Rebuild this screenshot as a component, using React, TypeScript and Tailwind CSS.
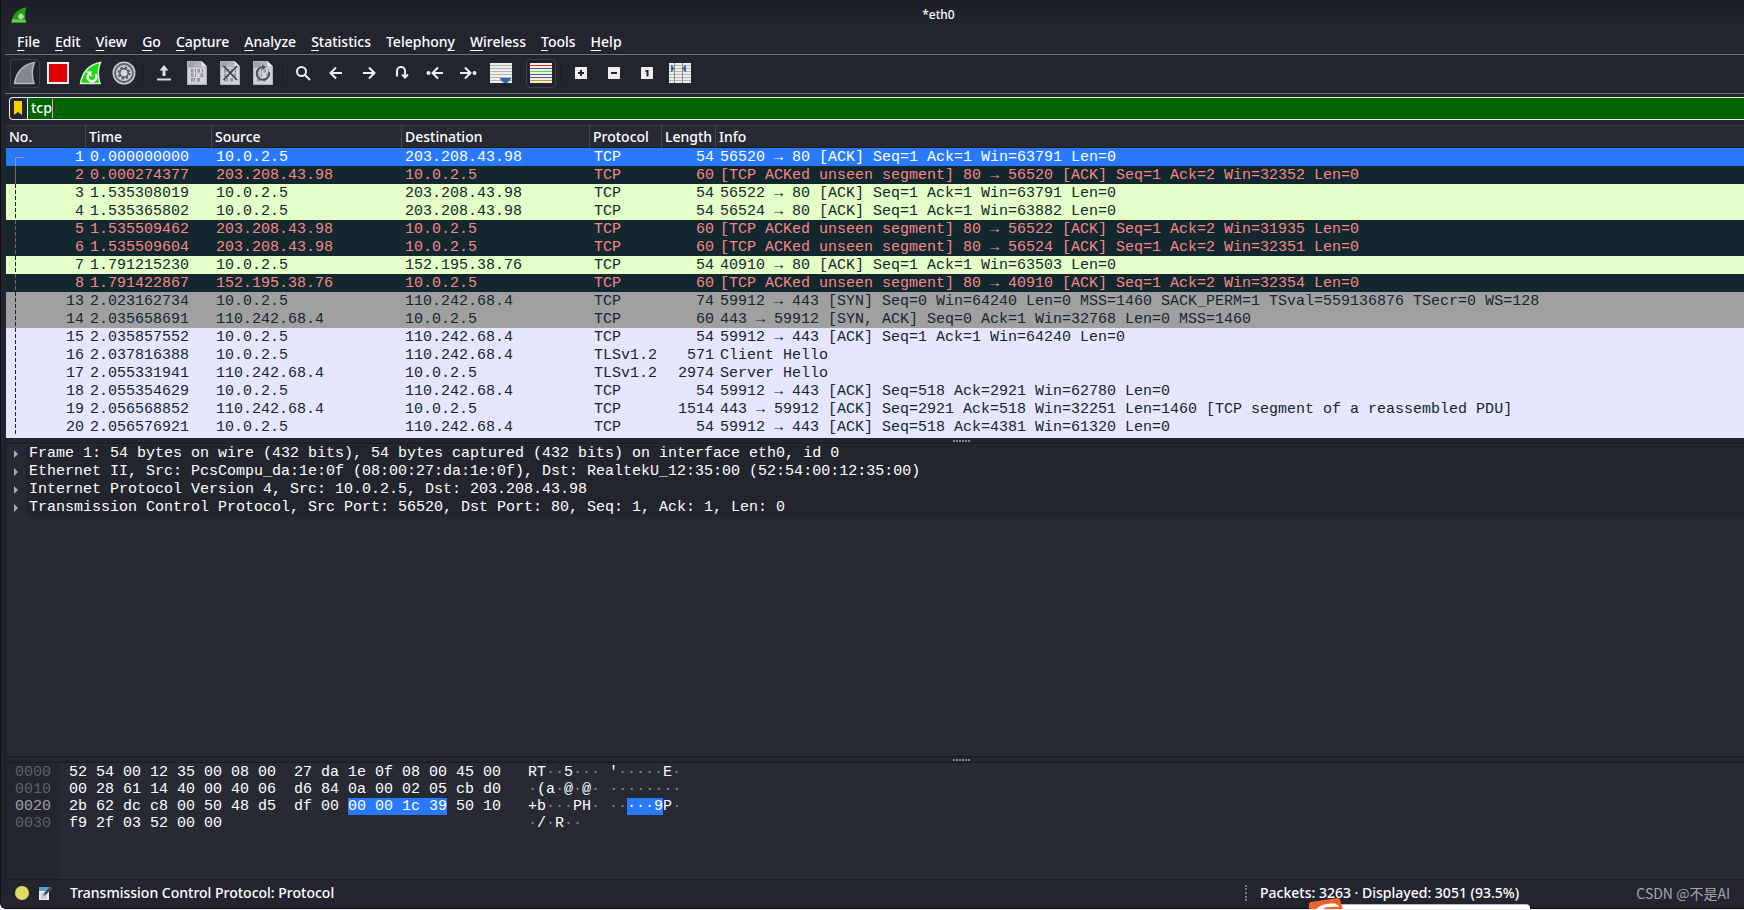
import type { ReactNode } from 'react';
import clsx from 'clsx';

type RowKind = 'selected' | 'bad' | 'http' | 'syn' | 'tcp';

interface Packet {
  no: number;
  time: string;
  src: string;
  dst: string;
  proto: string;
  len: number;
  info: string;
  kind: RowKind;
}

const ROW_STYLES: Record<RowKind, string> = {
  selected: 'bg-[#2979ff] text-white',
  bad: 'bg-[#12272e] text-[#f78787]',
  http: 'bg-[#e4ffc7] text-[#12272e]',
  syn: 'bg-[#a0a0a0] text-[#12272e]',
  tcp: 'bg-[#e7e6ff] text-[#12272e]',
};

const MENUS: [string, string, string][] = [
  ['', 'F', 'ile'],
  ['', 'E', 'dit'],
  ['', 'V', 'iew'],
  ['', 'G', 'o'],
  ['', 'C', 'apture'],
  ['', 'A', 'nalyze'],
  ['', 'S', 'tatistics'],
  ['Telephon', 'y', ''],
  ['', 'W', 'ireless'],
  ['', 'T', 'ools'],
  ['', 'H', 'elp'],
];

const HOST = '10.0.2.5';

const PACKETS: Packet[] = [
  { no: 1, time: '0.000000000', src: HOST, dst: '203.208.43.98', proto: 'TCP', len: 54, info: '56520 → 80 [ACK] Seq=1 Ack=1 Win=63791 Len=0', kind: 'selected' },
  { no: 2, time: '0.000274377', src: '203.208.43.98', dst: HOST, proto: 'TCP', len: 60, info: '[TCP ACKed unseen segment] 80 → 56520 [ACK] Seq=1 Ack=2 Win=32352 Len=0', kind: 'bad' },
  { no: 3, time: '1.535308019', src: HOST, dst: '203.208.43.98', proto: 'TCP', len: 54, info: '56522 → 80 [ACK] Seq=1 Ack=1 Win=63791 Len=0', kind: 'http' },
  { no: 4, time: '1.535365802', src: HOST, dst: '203.208.43.98', proto: 'TCP', len: 54, info: '56524 → 80 [ACK] Seq=1 Ack=1 Win=63882 Len=0', kind: 'http' },
  { no: 5, time: '1.535509462', src: '203.208.43.98', dst: HOST, proto: 'TCP', len: 60, info: '[TCP ACKed unseen segment] 80 → 56522 [ACK] Seq=1 Ack=2 Win=31935 Len=0', kind: 'bad' },
  { no: 6, time: '1.535509604', src: '203.208.43.98', dst: HOST, proto: 'TCP', len: 60, info: '[TCP ACKed unseen segment] 80 → 56524 [ACK] Seq=1 Ack=2 Win=32351 Len=0', kind: 'bad' },
  { no: 7, time: '1.791215230', src: HOST, dst: '152.195.38.76', proto: 'TCP', len: 54, info: '40910 → 80 [ACK] Seq=1 Ack=1 Win=63503 Len=0', kind: 'http' },
  { no: 8, time: '1.791422867', src: '152.195.38.76', dst: HOST, proto: 'TCP', len: 60, info: '[TCP ACKed unseen segment] 80 → 40910 [ACK] Seq=1 Ack=2 Win=32354 Len=0', kind: 'bad' },
  { no: 13, time: '2.023162734', src: HOST, dst: '110.242.68.4', proto: 'TCP', len: 74, info: '59912 → 443 [SYN] Seq=0 Win=64240 Len=0 MSS=1460 SACK_PERM=1 TSval=559136876 TSecr=0 WS=128', kind: 'syn' },
  { no: 14, time: '2.035658691', src: '110.242.68.4', dst: HOST, proto: 'TCP', len: 60, info: '443 → 59912 [SYN, ACK] Seq=0 Ack=1 Win=32768 Len=0 MSS=1460', kind: 'syn' },
  { no: 15, time: '2.035857552', src: HOST, dst: '110.242.68.4', proto: 'TCP', len: 54, info: '59912 → 443 [ACK] Seq=1 Ack=1 Win=64240 Len=0', kind: 'tcp' },
  { no: 16, time: '2.037816388', src: HOST, dst: '110.242.68.4', proto: 'TLSv1.2', len: 571, info: 'Client Hello', kind: 'tcp' },
  { no: 17, time: '2.055331941', src: '110.242.68.4', dst: HOST, proto: 'TLSv1.2', len: 2974, info: 'Server Hello', kind: 'tcp' },
  { no: 18, time: '2.055354629', src: HOST, dst: '110.242.68.4', proto: 'TCP', len: 54, info: '59912 → 443 [ACK] Seq=518 Ack=2921 Win=62780 Len=0', kind: 'tcp' },
  { no: 19, time: '2.056568852', src: '110.242.68.4', dst: HOST, proto: 'TCP', len: 1514, info: '443 → 59912 [ACK] Seq=2921 Ack=518 Win=32251 Len=1460 [TCP segment of a reassembled PDU]', kind: 'tcp' },
  { no: 20, time: '2.056576921', src: HOST, dst: '110.242.68.4', proto: 'TCP', len: 54, info: '59912 → 443 [ACK] Seq=518 Ack=4381 Win=61320 Len=0', kind: 'tcp' },
];

const DETAILS = [
  'Frame 1: 54 bytes on wire (432 bits), 54 bytes captured (432 bits) on interface eth0, id 0',
  'Ethernet II, Src: PcsCompu_da:1e:0f (08:00:27:da:1e:0f), Dst: RealtekU_12:35:00 (52:54:00:12:35:00)',
  'Internet Protocol Version 4, Src: 10.0.2.5, Dst: 203.208.43.98',
  'Transmission Control Protocol, Src Port: 56520, Dst Port: 80, Seq: 1, Ack: 1, Len: 0',
];

// [before, highlighted, after] for both the hex and the ascii side
const HEX_ROWS = [
  { offset: '0000', hex: ['52 54 00 12 35 00 08 00  27 da 1e 0f 08 00 45 00', '', ''], ascii: ["RT··5··· '·····E·", '', ''] },
  { offset: '0010', hex: ['00 28 61 14 40 00 40 06  d6 84 0a 00 02 05 cb d0', '', ''], ascii: ['·(a·@·@· ········', '', ''] },
  { offset: '0020', hex: ['2b 62 dc c8 00 50 48 d5  df 00 ', '00 00 1c 39', ' 50 10'], ascii: ['+b···PH· ··', '···9', 'P·'] },
  { offset: '0030', hex: ['f9 2f 03 52 00 00', '', ''], ascii: ['·/·R··', '', ''] },
];

const MONO = "font-['Liberation_Mono',monospace] text-[15px]";

/* ---------- icons ---------- */

const FIN = 'M1.5 22.5C3 12 10 3 21.5 1.5C18.500 8 19 16 21 22.500Z';

function Fin({ fill, stroke, children }: { fill: string; stroke: string; children?: ReactNode }) {
  return (
    <svg width="24" height="24" viewBox="0 0 24 24">
      <path d={FIN} fill={fill} stroke={stroke} strokeWidth="1.5" />
      {children}
    </svg>
  );
}

function AppLogo() {
  return (
    <svg width="16" height="16" viewBox="0 0 16 16">
      <path d="M0.500 15.500C1 8 6 1.500 15.500 0.500C13.500 5 14 11 15.500 15.500Z" fill="#1fa012" />
      <path d="M0.500 15.500C0.500 14 1 13 1.500 12L14 13L15.500 15.500Z" fill="#69c45c" />
      <circle cx="10" cy="9.500" r="2.400" fill="#a9dba2" stroke="#dff2dc" strokeWidth="1" strokeDasharray="1.200 0.700" />
    </svg>
  );
}

function Gear() {
  return (
    <svg width="24" height="24" viewBox="0 0 24 24" fill="none">
      <circle cx="12" cy="12" r="11.500" fill="#c9cbcf" />
      <circle cx="12" cy="12" r="9" stroke="#5c5f67" strokeWidth="1.800" />
      <circle cx="12" cy="12" r="5.700" stroke="#4f525a" strokeWidth="1.600" strokeDasharray="2.240 2.240" />
      <circle cx="12" cy="12" r="4.200" fill="#d4d6da" stroke="#4f525a" strokeWidth="1.500" />
    </svg>
  );
}

function BinaryDoc({ children }: { children?: ReactNode }) {
  return (
    <svg width="20" height="24" viewBox="0 0 20 24" fill="none">
      <path d="M0 0H14.500L20 5.500V24H0Z" fill="#b0b2b7" />
      <path d="M1.200 6.500H18.800V22.800H1.200Z" fill="#d2d4d8" />
      <path d="M1.200 1.200H9C7.500 2.500 7 4 6.500 6.500H1.200Z" fill="#9fa1a7" />
      <path d="M14.500 0V5.500H20Z" fill="#e7e8ea" />
      {[8, 12.5, 17].map((y, i) => (
        <g key={y} stroke="#8b8e95" strokeWidth="1">
          <path d={`M${i === 2 ? 7.5 : 8.5} ${y}V${y + 3.5}M${i === 2 ? 11 : 15.5} ${y}V${y + 3.5}`} />
          <rect x="4.500" y={y + 0.5} width="1.500" height="2.500" />
          <rect x={i === 1 ? 14 : 11} y={y + 0.5} width="1.500" height="2.500" />
        </g>
      ))}
      {children}
    </svg>
  );
}

function Glyph({ d, children }: { d: string; children?: ReactNode }) {
  return (
    <svg width="18" height="18" viewBox="0 0 18 18" fill="none" stroke="#eeeeec" strokeWidth="2">
      <path d={d} />
      {children}
    </svg>
  );
}

function Lines({ colors, children }: { colors: string[]; children?: ReactNode }) {
  return (
    <svg width="22" height="22" viewBox="0 0 22 22">
      <rect y="1" width="22" height="20" fill="#eeeeec" />
      {colors.map((c, i) => (
        <rect key={i} y={3 + i * 3} width="22" height="1" fill={c} />
      ))}
      {children}
    </svg>
  );
}

function ZoomBox({ d }: { d: string }) {
  return (
    <svg width="12" height="12" viewBox="0 0 12 12" fill="none">
      <rect width="12" height="12" rx="0.500" fill="#eeeeec" />
      <path d={d} stroke="#23252e" strokeWidth="2" />
    </svg>
  );
}

const GREYS = ['#b5b6b0', '#b5b6b0', '#b5b6b0', '#b5b6b0', '#b5b6b0', '#b5b6b0'];
const RAINBOW = ['#ef2929', '#3465a4', '#73d216', '#3465a4', '#75507b', '#c4a000'];

/* ---------- pieces ---------- */

function ToolButton({ label, framed, children }: { label: string; framed?: boolean; children: ReactNode }) {
  return (
    <button type="button" aria-label={label} className="flex w-[33px] shrink-0 items-center justify-center">
      <span
        className={clsx(
          'flex h-[29px] w-[30px] items-center justify-center rounded-sm border',
          framed ? 'border-[#3d4048] bg-[#20222a]' : 'border-transparent',
        )}
      >
        {children}
      </span>
    </button>
  );
}

function ToolSep() {
  return <span className="mx-[3px] h-5 w-px shrink-0 bg-[#1c1e25]" />;
}

function SplitHandle() {
  return (
    <div className="flex h-[5px] shrink-0 items-center justify-center gap-px pl-[178px]">
      {Array.from({ length: 6 }, (_, i) => (
        <span key={i} className="h-[2px] w-[2px] bg-[#85878c]" />
      ))}
    </div>
  );
}

// Conversation line drawn in the left margin of the No. column
function StreamLine({ index }: { index: number }) {
  return (
    <svg className="absolute left-[9px] top-0" width="10" height="18" viewBox="0 0 10 18" fill="none">
      {index === 0 && <path d="M0.500 18V9.500H9" stroke="#8a99b5" />}
      {index === 1 && <path d="M0.500 0V18" stroke="#8b5a5e" />}
      {index > 1 && (
        <path
          d="M0.500 0V18"
          stroke={PACKETS[index].kind === 'bad' ? '#8b5a5e' : '#12272e'}
          strokeDasharray="4 2"
        />
      )}
    </svg>
  );
}

function Bytes({ parts, dim }: { parts: string[]; dim?: boolean }) {
  const [before, hot, after] = parts;
  const fade = (text: string) =>
    dim
      ? text.split(/(·+)/).map((s, i) => (s.startsWith('·') ? <span key={i} className="text-[#85878c]">{s}</span> : s))
      : text;
  return (
    <>
      {fade(before)}
      {hot && <span className="bg-[#2979ff]">{hot}</span>}
      {fade(after)}
    </>
  );
}

const TH = 'border-r border-[#44474f] p-0 pl-[3px] text-left font-medium';
const TD = 'p-0 pt-[2px]';

export default function App() {
  return (
    <div className="flex min-h-screen flex-col overflow-hidden border-b border-[#f4f4f4] bg-white font-['Noto_Sans',sans-serif] text-sm font-medium text-white">
      <div className="flex flex-1 flex-col rounded-bl-md border-b border-l border-[#0e0f13] bg-[#23252e]">
        {/* title bar */}
        <header className="flex h-7 shrink-0 items-center bg-linear-to-b from-[#1d1f27] to-[#23252e] pl-[10px] pt-[2px]">
          <AppLogo />
          <h1 className="flex-1 pl-[106px] text-center text-xs leading-6">*eth0</h1>
        </header>

        <nav className="ml-1 flex h-[27px] shrink-0 items-center gap-[15px] border-b border-[#6d6f75] pl-3 pt-[2px] leading-6">
          {MENUS.map(([pre, key, post]) => (
            <button key={pre + key + post} type="button" className="font-medium">
              {pre}
              <u className="underline-offset-[3px]">{key}</u>
              {post}
            </button>
          ))}
        </nav>

        <div className="ml-1 flex h-[39px] shrink-0 items-center border-b border-[#6d6f75] pb-[2px] pl-[3px]">
          <ToolButton label="Start capture" framed>
            <Fin fill="#85878e" stroke="#b5b7bb" />
          </ToolButton>
          <ToolButton label="Stop capture">
            <span className="h-[22px] w-[22px] border-2 border-[#eeeeec] bg-[#e00000]" />
          </ToolButton>
          <ToolButton label="Restart capture">
            <Fin fill="#1fdc10" stroke="#d9f5d6">
              <path d="M9.500 13.500A4.300 4.300 0 1 0 16.500 13.500" fill="none" stroke="#fff" strokeWidth="2.400" />
              <path d="M7 10.500H12.500V16Z" fill="#fff" />
            </Fin>
          </ToolButton>
          <ToolButton label="Capture options"><Gear /></ToolButton>
          <ToolSep />
          <ToolButton label="Open">
            <svg width="14" height="16" viewBox="0 0 14 16" fill="#dcdee2">
              <path d="M7 0L11.500 5.500H8.500V11H5.500V5.500H2.500ZM0 13.500H14V15.500H0Z" />
            </svg>
          </ToolButton>
          <ToolButton label="Save"><BinaryDoc /></ToolButton>
          <ToolButton label="Close">
            <BinaryDoc>
              <path d="M3.500 5L17 19M17 5L3.500 19" stroke="#3f424a" strokeWidth="1.800" />
            </BinaryDoc>
          </ToolButton>
          <ToolButton label="Reload">
            <BinaryDoc>
              <path d="M16 11A6.300 6.300 0 1 1 9.500 6.200" stroke="#4a4d55" strokeWidth="1.800" />
              <path d="M9 3.500L13 6.200L9 9Z" fill="#4a4d55" />
            </BinaryDoc>
          </ToolButton>
          <ToolSep />
          <ToolButton label="Find">
            <Glyph d="M11 11L16 16">
              <circle cx="7.500" cy="7.500" r="4.500" />
            </Glyph>
          </ToolButton>
          <ToolButton label="Previous"><Glyph d="M3.500 9H15M9 3.500L3.500 9L9 14.500" /></ToolButton>
          <ToolButton label="Next"><Glyph d="M3 9H14.500M9 3.500L14.500 9L9 14.500" /></ToolButton>
          <ToolButton label="Go to packet"><Glyph d="M4 12.500V7A4 4 0 0 1 12 7V13M9 10.500L12 13.500L15 10.500" /></ToolButton>
          <ToolButton label="First packet">
            <Glyph d="M6.500 9H17M12 3.500L6.500 9L12 14.500">
              <circle cx="2.500" cy="9" r="1" />
            </Glyph>
          </ToolButton>
          <ToolButton label="Last packet">
            <Glyph d="M1 9H11.500M6 3.500L11.500 9L6 14.500">
              <circle cx="15.500" cy="9" r="1" />
            </Glyph>
          </ToolButton>
          <ToolButton label="Auto scroll">
            <Lines colors={GREYS}>
              <path d="M10 16H21C21 19 18 19.500 17 21H14C13 19.500 10 19 10 16Z" fill="#3465a4" />
            </Lines>
          </ToolButton>
          <ToolSep />
          <ToolButton label="Colorize" framed><Lines colors={RAINBOW} /></ToolButton>
          <ToolSep />
          <ToolButton label="Zoom in"><ZoomBox d="M6 3V9M3 6H9" /></ToolButton>
          <ToolButton label="Zoom out"><ZoomBox d="M3 6H9" /></ToolButton>
          <ToolButton label="Normal size"><ZoomBox d="M4.500 4H6.500V9.500" /></ToolButton>
          <ToolButton label="Resize columns">
            <Lines colors={GREYS}>
              <path d="M5.500 1V21M13.500 1V21" stroke="#888a85" />
              <path d="M2 3C4 3.500 4 5 5.500 6.500C4 8 4 9.500 2 10ZM17 3C15 3.500 15 5 13.500 6.500C15 8 15 9.500 17 10Z" fill="#3465a4" />
            </Lines>
          </ToolButton>
        </div>

        {/* display filter */}
        <div className="ml-2 mt-[3px] flex h-[23px] shrink-0 rounded-l-sm border border-r-0 border-[#eeeeec]">
          <button type="button" aria-label="Filter bookmarks" className="flex w-[18px] items-center justify-center border-r border-[#eeeeec] pb-px pr-px">
            <svg width="8" height="14" viewBox="0 0 8 14">
              <path d="M0 0H8V14L4 11L0 14Z" fill="#edd400" />
            </svg>
          </button>
          <div className="relative flex-1 bg-[#006400]">
            <input
              type="text"
              aria-label="Display filter"
              defaultValue="tcp"
              className="block h-full w-full bg-transparent pb-[2px] pl-[3px] text-sm font-medium outline-none"
            />
            <span className="absolute left-6 top-px h-[19px] w-px bg-[#ff8cf0]" />
          </div>
        </div>

        {/* packet list */}
        <div className="ml-[5px] mt-[5px] shrink-0 overflow-hidden bg-[#e7e6ff] pb-[2px]">
          <table className="w-full table-fixed border-separate border-spacing-0">
            <colgroup>
              <col className="w-[80px]" />
              <col className="w-[126px]" />
              <col className="w-[190px]" />
              <col className="w-[188px]" />
              <col className="w-[72px]" />
              <col className="w-[54px]" />
              <col />
            </colgroup>
            <thead>
              <tr className="h-[23px] bg-[#272a34] leading-[22px] shadow-[inset_0_1px_0_#3a3d45,inset_0_-1px_0_#191b21]">
                <th className={TH}>No.</th>
                <th className={TH}>Time</th>
                <th className={TH}>Source</th>
                <th className={TH}>Destination</th>
                <th className={TH}>Protocol</th>
                <th className={TH}>Length</th>
                <th className="p-0 pl-[3px] text-left font-medium">Info</th>
              </tr>
            </thead>
            <tbody className={clsx(MONO, 'whitespace-pre font-normal leading-4')}>
              {PACKETS.map((p, i) => (
                <tr key={p.no} className={clsx('h-[18px]', ROW_STYLES[p.kind])}>
                  <td className={clsx(TD, 'relative pr-[2px] text-right')}>
                    <StreamLine index={i} />
                    {p.no}
                  </td>
                  <td className={clsx(TD, 'pl-1')}>{p.time}</td>
                  <td className={clsx(TD, 'pl-1')}>{p.src}</td>
                  <td className={clsx(TD, 'pl-[3px]')}>{p.dst}</td>
                  <td className={clsx(TD, 'pl-1')}>{p.proto}</td>
                  <td className={clsx(TD, 'pr-[2px] text-right')}>{p.len}</td>
                  <td className={clsx(TD, 'pl-1')}>{p.info}</td>
                </tr>
              ))}
            </tbody>
          </table>
        </div>

        <SplitHandle />

        {/* packet details */}
        <div className={clsx(MONO, 'ml-1 flex-1 border-y border-l border-[#191b21] bg-[#272a34] pt-px font-normal leading-[18px]')}>
          <ul>
            {DETAILS.map((line) => (
              <li key={line} className="flex items-center">
                <button type="button" aria-label="Expand" className="flex w-5 shrink-0 justify-center">
                  <svg width="4" height="8" viewBox="0 0 4 8" fill="#a9abaf">
                    <path d="M0 0L4 4L0 8Z" />
                  </svg>
                </button>
                <span className="flex-1 whitespace-pre bg-[#23252e] pl-[3px]">{line}</span>
              </li>
            ))}
          </ul>
        </div>

        <SplitHandle />

        {/* packet bytes */}
        <div className={clsx(MONO, 'ml-1 flex h-[118px] shrink-0 border-y border-l border-[#191b21] bg-[#272a34] font-normal leading-[17px]')}>
          <div className="w-[54px] bg-[#23252e] pl-[9px] pt-px text-[#5f6168]">
            {HEX_ROWS.map((r) => (
              <div key={r.offset} className={clsx('h-[17px]', r.hex[1] && 'text-[#a0a2a6]')}>{r.offset}</div>
            ))}
          </div>
          <div className="whitespace-pre pl-[9px] pt-px">
            {HEX_ROWS.map((r) => (
              <div key={r.offset} className="flex h-[17px]">
                <div className="w-[459px]"><Bytes parts={r.hex} /></div>
                <div><Bytes parts={r.ascii} dim /></div>
              </div>
            ))}
          </div>
        </div>

        {/* status bar */}
        <footer className="relative flex h-7 shrink-0 items-center pb-[2px] pl-[14px] leading-6">
          <span className="h-[14px] w-[14px] rounded-full bg-[#dfdc63]" />
          <svg className="ml-[9px]" width="14" height="14" viewBox="0 0 14 14">
            <path d="M1 1H11V14H1Z" fill="#e9eaec" />
            <path d="M1 1H11V5H1Z" fill="#4fa3d8" />
            <path d="M3 8H9M3 10H9M3 12H8" stroke="#a5a7aa" />
            <path d="M5.500 9.500L6.500 6.500L12 1L14 2.500L8 8.500Z" fill="#3b3e45" stroke="#8b8d92" strokeWidth="0.500" />
          </svg>
          <span className="ml-[18px] flex-1">Transmission Control Protocol: Protocol</span>
          <div className="flex w-[499px] items-center">
            <span className="h-4 border-l-2 border-dotted border-[#75777c]" />
            <span className="ml-[13px] flex-1">Packets: 3263 · Displayed: 3051 (93.5%)</span>
            <span className="mr-[14px] font-['Noto_Sans_CJK_SC',sans-serif] font-normal text-[#a5a6aa]">CSDN @不是AI</span>
          </div>
          {/* input method bar poking in from below */}
          <div className="absolute -bottom-[2px] right-[214px] h-[6px] w-[200px] rounded-tr-sm border-t border-[#b9bccb] bg-white" />
          <svg className="absolute -bottom-[2px] right-[400px]" width="36" height="12" viewBox="0 0 36 12">
            <path d="M1 12V6Q1 4.500 3 4L29 0.300Q31.500 0 32 2L35 12Z" fill="#f4622c" />
            <path d="M8 12C10 7.500 18 5 27 5.500L31 8L30 9C22 8 16 9 14.500 12Z" fill="#fff" />
          </svg>
        </footer>
      </div>
    </div>
  );
}
